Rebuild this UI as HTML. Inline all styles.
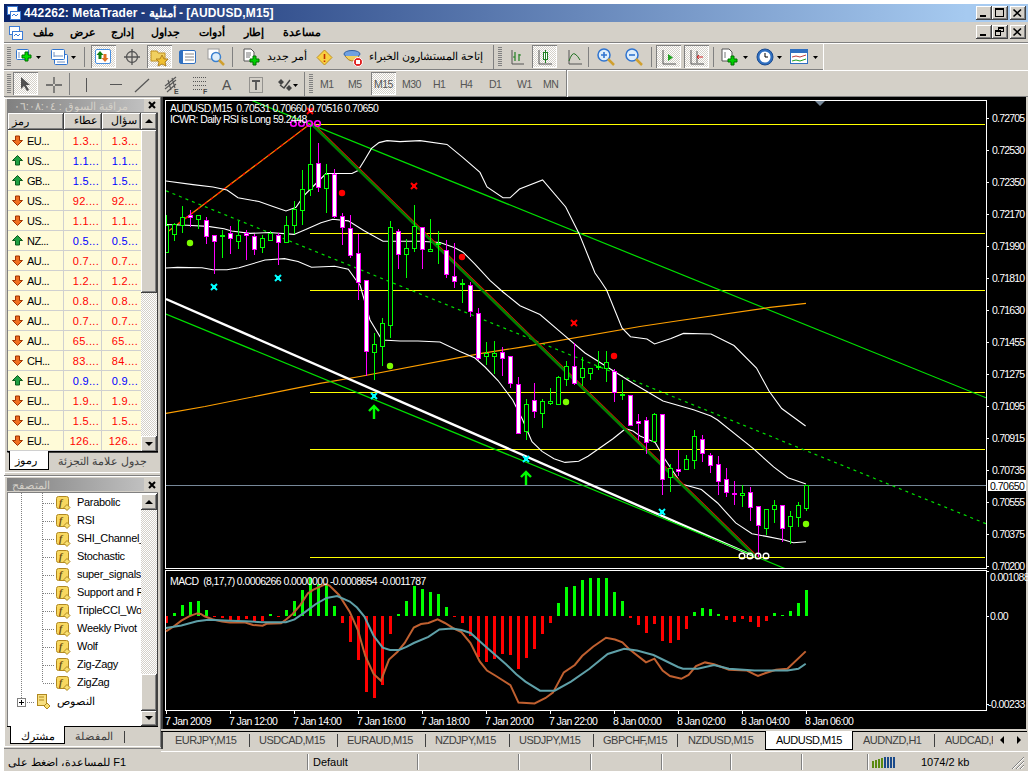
<!DOCTYPE html><html><head><meta charset="utf-8"><style>
*{margin:0;padding:0;box-sizing:border-box}
html,body{width:1032px;height:776px;overflow:hidden;background:#fff;font-family:"Liberation Sans",sans-serif;font-size:11px;color:#000}
.a{position:absolute}
.t{position:absolute;white-space:nowrap;line-height:1;letter-spacing:-0.5px}
.btn{position:absolute;background:#d4d0c8;box-shadow:inset -1px -1px #404040,inset 1px 1px #fff,inset -2px -2px #808080}
.prs{position:absolute;background-color:#fff;background-image:repeating-conic-gradient(#d4d0c8 0 25%,#fff 0 50%);background-size:2px 2px;box-shadow:inset 1px 1px #808080,inset -1px -1px #fff}
.sep{position:absolute;width:1px;background:#808080}
.grip{position:absolute;width:4px;background:repeating-linear-gradient(180deg,#808080 0 1px,#d4d0c8 1px 2px)}
svg{position:absolute;overflow:visible}
</style></head><body><div class="a" style="left:4px;top:4px;width:1024px;height:767px;background:#d4d0c8"></div><div class="a" style="left:4px;top:4px;width:1024px;height:18px;background:linear-gradient(90deg,#0a246a 0%,#a6caf0 94%)"></div><svg style="left:6px;top:5px;" width="16" height="16" viewBox="0 0 16 16"><rect x="1.5" y="1.5" width="10" height="8" fill="#fff" stroke="#3a7bd5"/><rect x="4.5" y="6.5" width="10" height="8" fill="#fff" stroke="#3a7bd5"/><path d="M6 11l2-2 2 2 2-2" stroke="#3a7bd5" fill="none"/></svg><div class="t" style="left:24px;top:7px;color:#fff;font-weight:bold;font-size:12px;letter-spacing:0.12px">442262: MetaTrader - أمثلية - [AUDUSD,M15]</div><div class="btn" style="left:976px;top:6px;width:16px;height:14px;"></div><div class="a" style="left:980px;top:15px;width:6px;height:2px;background:#000"></div><div class="btn" style="left:992px;top:6px;width:16px;height:14px;"></div><div class="a" style="left:995px;top:8px;width:9px;height:9px;border:1px solid #000;border-top-width:2px"></div><div class="btn" style="left:1010px;top:6px;width:16px;height:14px;"></div><svg style="left:1013px;top:9px;" width="9" height="8" viewBox="0 0 9 8"><path d="M0.5 0.5L8 7.5M8 0.5L0.5 7.5" stroke="#000" stroke-width="1.6"/></svg><svg style="left:8px;top:25px;" width="16" height="16" viewBox="0 0 16 16"><rect x="1.5" y="1.5" width="10" height="8" fill="#fff" stroke="#3a7bd5"/><rect x="4.5" y="6.5" width="10" height="8" fill="#fff" stroke="#3a7bd5"/><path d="M6 11l2-2 2 2 2-2" stroke="#3a7bd5" fill="none"/></svg><div class="t" style="left:33px;top:27px;letter-spacing:0;font-size:10.5px;font-weight:bold">ملف</div><div class="t" style="left:70px;top:27px;letter-spacing:0;font-size:10.5px;font-weight:bold">عرض</div><div class="t" style="left:111px;top:27px;letter-spacing:0;font-size:10.5px;font-weight:bold">إدارج</div><div class="t" style="left:151px;top:27px;letter-spacing:0;font-size:10.5px;font-weight:bold">جداول</div><div class="t" style="left:199px;top:27px;letter-spacing:0;font-size:10.5px;font-weight:bold">أدوات</div><div class="t" style="left:244px;top:27px;letter-spacing:0;font-size:10.5px;font-weight:bold">إطار</div><div class="t" style="left:283px;top:27px;letter-spacing:0;font-size:10.5px;font-weight:bold">مساعدة</div><div class="btn" style="left:976px;top:25px;width:16px;height:14px;"></div><div class="a" style="left:980px;top:34px;width:6px;height:2px;background:#000"></div><div class="btn" style="left:992px;top:25px;width:16px;height:14px;"></div><div class="a" style="left:998px;top:27px;width:6px;height:5px;border:1px solid #000;border-top-width:2px"></div><div class="a" style="left:995px;top:30px;width:6px;height:6px;border:1px solid #000;border-top-width:2px;background:#d4d0c8"></div><div class="btn" style="left:1010px;top:25px;width:16px;height:14px;"></div><svg style="left:1013px;top:28px;" width="9" height="8" viewBox="0 0 9 8"><path d="M0.5 0.5L8 7.5M8 0.5L0.5 7.5" stroke="#000" stroke-width="1.6"/></svg><div class="a" style="left:4px;top:42px;width:1024px;height:1px;background:#808080"></div><div class="a" style="left:4px;top:43px;width:1024px;height:1px;background:#fff"></div><div class="a" style="left:4px;top:69px;width:820px;height:1px;background:#808080"></div><div class="a" style="left:4px;top:70px;width:1024px;height:1px;background:#fff"></div><div class="a" style="left:823px;top:43px;width:1px;height:27px;background:#fff"></div><div class="a" style="left:4px;top:96px;width:1024px;height:1px;background:#808080"></div><div class="a" style="left:566px;top:70px;width:1px;height:27px;background:#808080"></div><div class="a" style="left:567px;top:70px;width:1px;height:27px;background:#fff"></div><div class="grip" style="left:7px;top:47px;height:19px"></div><svg style="left:16px;top:49px;" width="18" height="16" viewBox="0 0 18 16"><rect x="0.5" y="0.5" width="12" height="10" rx="1" fill="#fff" stroke="#2f74d0"/><path d="M3 3v6" stroke="#7090c0"/><path d="M9 3h3v3h3v3h-3v3h-3v-3h-3v-3h3z" fill="#00e000" stroke="#007000"/></svg><svg style="left:36px;top:56px;" width="5" height="3" viewBox="0 0 5 3"><path d="M0 0h5l-2.5 3z" fill="#000"/></svg><svg style="left:51px;top:49px;" width="18" height="17" viewBox="0 0 18 17"><rect x="3.5" y="5.5" width="13" height="10" rx="1" fill="#fff" stroke="#2f74d0"/><rect x="0.5" y="0.5" width="13" height="10" rx="1" fill="#fff" stroke="#2f74d0"/><path d="M3 7h9M3 3v5M6 13h8" stroke="#7090c0"/></svg><svg style="left:71px;top:56px;" width="5" height="3" viewBox="0 0 5 3"><path d="M0 0h5l-2.5 3z" fill="#000"/></svg><div class="sep" style="left:84px;top:47px;height:20px"></div><div class="prs" style="left:91px;top:45px;width:25px;height:23px;"></div><svg style="left:95px;top:49px;" width="17" height="16" viewBox="0 0 17 16"><rect x="0.5" y="0.5" width="15" height="14" rx="1.5" fill="#fff" stroke="#4a90e0"/><path d="M5 2l-3.5 4h2v4h3v-4h2z" fill="#108010"/><path d="M10 13l3.5-4h-2v-4h-3v4h-2z" fill="#e07020"/></svg><svg style="left:124px;top:49px;" width="16" height="16" viewBox="0 0 16 16"><circle cx="8" cy="8" r="5.5" fill="none" stroke="#555" stroke-width="1.3"/><path d="M8 0v16M0 8h16" stroke="#555" stroke-width="1.3"/></svg><div class="prs" style="left:147px;top:45px;width:25px;height:23px;"></div><svg style="left:150px;top:48px;" width="20" height="18" viewBox="0 0 20 18"><path d="M1 3h6l1 2h7v8h-14z" fill="#f0d060" stroke="#c09020"/><path d="M12 7l2 4h4l-3 3 1 4-4-2-4 2 1-4-3-3h4z" fill="#f0c030" stroke="#b08020"/></svg><svg style="left:179px;top:50px;" width="17" height="14" viewBox="0 0 17 14"><rect x="0.5" y="0.5" width="16" height="13" rx="1.5" fill="#fff" stroke="#3070c0"/><rect x="1" y="1" width="3" height="12" fill="#3070c0"/><path d="M6 4h9M6 7h9M6 10h9" stroke="#888"/></svg><svg style="left:207px;top:48px;" width="19" height="19" viewBox="0 0 19 19"><rect x="1" y="1" width="11" height="10" fill="#fff" stroke="#999"/><circle cx="9" cy="9" r="4.5" fill="#dfeefa" stroke="#3a80d0" stroke-width="1.5"/><path d="M12 12l5 5" stroke="#d0a030" stroke-width="2.5"/></svg><div class="sep" style="left:232px;top:47px;height:20px"></div><svg style="left:243px;top:48px;" width="18" height="18" viewBox="0 0 18 18"><path d="M1 1h7l3 3v9h-10z" fill="#fff" stroke="#555"/><path d="M3 5h5M3 7h5M3 9h4" stroke="#777"/><path d="M10 8h3v3h3v3h-3v3h-3v-3h-3v-3h3z" fill="#00d000" stroke="#007000"/></svg><div class="t" style="left:267px;top:51px;letter-spacing:0;font-size:11px">أمر جديد</div><svg style="left:316px;top:49px;" width="17" height="17" viewBox="0 0 17 17"><path d="M8.5 1l7.5 7.5-7.5 7.5-7.5-7.5z" fill="#f8d040" stroke="#c09020"/><path d="M8.5 5v5M8.5 11.5v1.5" stroke="#c03000" stroke-width="1.6"/></svg><svg style="left:343px;top:48px;" width="20" height="19" viewBox="0 0 20 19"><ellipse cx="9" cy="6" rx="8" ry="3.5" fill="#6fa0e0" stroke="#3060a0"/><path d="M2 8q7 10 14 0" fill="#f0d060" stroke="#b08020"/><circle cx="15" cy="14" r="4.5" fill="#e02020" stroke="#fff"/><rect x="13" y="12" width="4" height="4" fill="#fff"/></svg><div class="t" style="left:369px;top:51px;letter-spacing:0;font-size:11px">إتاحة المستشارون الخبراء</div><div class="sep" style="left:493px;top:45px;height:24px"></div><div class="grip" style="left:498px;top:47px;height:19px"></div><svg style="left:509px;top:49px;" width="16" height="16" viewBox="0 0 16 16"><path d="M3 1v14h12" stroke="#555" fill="none"/><path d="M6 3v9M6 8h-2M10 5v7M10 6h2" stroke="#208020" stroke-width="1.2"/></svg><div class="prs" style="left:532px;top:45px;width:25px;height:23px;"></div><svg style="left:536px;top:49px;" width="17" height="16" viewBox="0 0 17 16"><path d="M3 1v14h13" stroke="#555" fill="none"/><rect x="7.5" y="3.5" width="4" height="7" fill="#fff" stroke="#208020"/><path d="M9.5 1v13" stroke="#208020"/></svg><svg style="left:566px;top:49px;" width="16" height="16" viewBox="0 0 16 16"><path d="M3 1v14h13" stroke="#555" fill="none"/><path d="M3 12q3-9 6-7t5 6" stroke="#207020" fill="none"/></svg><div class="sep" style="left:588px;top:47px;height:20px"></div><svg style="left:597px;top:48px;" width="18" height="18" viewBox="0 0 18 18"><circle cx="7" cy="7" r="6" fill="#dfeefa" stroke="#2f74d0" stroke-width="1.5"/><path d="M4 7h6M7 4v6" stroke="#2f74d0" stroke-width="1.6"/><path d="M11 11l6 6" stroke="#d0a030" stroke-width="2.5"/></svg><svg style="left:625px;top:48px;" width="18" height="18" viewBox="0 0 18 18"><circle cx="7" cy="7" r="6" fill="#dfeefa" stroke="#2f74d0" stroke-width="1.5"/><path d="M4 7h6" stroke="#2f74d0" stroke-width="1.6"/><path d="M11 11l6 6" stroke="#d0a030" stroke-width="2.5"/></svg><div class="sep" style="left:651px;top:47px;height:20px"></div><div class="prs" style="left:656px;top:45px;width:25px;height:23px;"></div><svg style="left:660px;top:49px;" width="17" height="16" viewBox="0 0 17 16"><path d="M3 1v14h13" stroke="#555" fill="none"/><path d="M8 5v7l5-3.5z" fill="#20a020"/></svg><div class="prs" style="left:684px;top:45px;width:25px;height:23px;"></div><svg style="left:688px;top:49px;" width="17" height="16" viewBox="0 0 17 16"><path d="M3 1v14h13M9 2v12" stroke="#555" fill="none"/><path d="M10 8h5M11 6l-2 2 2 2" stroke="#d02020" fill="none"/></svg><div class="sep" style="left:713px;top:47px;height:20px"></div><svg style="left:721px;top:48px;" width="18" height="18" viewBox="0 0 18 18"><path d="M1 1h7l3 3v9h-10z" fill="#fff" stroke="#555"/><path d="M4 4v6" stroke="#777"/><path d="M10 8h3v3h3v3h-3v3h-3v-3h-3v-3h3z" fill="#00d000" stroke="#007000"/></svg><svg style="left:743px;top:56px;" width="5" height="3" viewBox="0 0 5 3"><path d="M0 0h5l-2.5 3z" fill="#000"/></svg><svg style="left:756px;top:48px;" width="18" height="18" viewBox="0 0 18 18"><circle cx="9" cy="9" r="8" fill="#2f6fc0" stroke="#1a4a90"/><circle cx="9" cy="9" r="5.5" fill="#fff"/><path d="M9 5v4h3" stroke="#000" fill="none"/></svg><svg style="left:777px;top:56px;" width="5" height="3" viewBox="0 0 5 3"><path d="M0 0h5l-2.5 3z" fill="#000"/></svg><svg style="left:790px;top:49px;" width="18" height="16" viewBox="0 0 18 16"><rect x="0.5" y="0.5" width="17" height="14" fill="#fff" stroke="#2f6fc0"/><rect x="1" y="1" width="16" height="3" fill="#2f6fc0"/><path d="M2 8l4-1 4 1 6-2" stroke="#c04040" fill="none"/><path d="M2 12l4-1 4 1 6-2" stroke="#20a020" fill="none"/></svg><svg style="left:813px;top:56px;" width="5" height="3" viewBox="0 0 5 3"><path d="M0 0h5l-2.5 3z" fill="#000"/></svg><div class="grip" style="left:7px;top:74px;height:20px"></div><div class="prs" style="left:13px;top:72px;width:25px;height:23px;"></div><svg style="left:20px;top:76px;" width="11" height="15" viewBox="0 0 11 15"><path d="M1 1v12l3-3 3 5 2-1-3-5h4z" fill="#505050"/></svg><svg style="left:46px;top:77px;" width="16" height="16" viewBox="0 0 16 16"><path d="M8 0v7M8 9v7M0 8h7M9 8h7" stroke="#555" stroke-width="1.3"/></svg><div class="sep" style="left:69px;top:73px;height:22px"></div><div class="a" style="left:86px;top:78px;width:1px;height:14px;background:#555"></div><div class="a" style="left:110px;top:84px;width:12px;height:1px;background:#555"></div><svg style="left:134px;top:78px;" width="16" height="15" viewBox="0 0 16 15"><path d="M1 14L15 1" stroke="#555" stroke-width="1.2"/></svg><svg style="left:162px;top:76px;" width="20" height="18" viewBox="0 0 20 18"><path d="M3 13L14 4M3 10L14 1M5 16L14 8M6 4l3 10M10 2l3 10" stroke="#555" stroke-width="1.1"/><text x="12" y="18" font-size="7" font-weight="bold" fill="#444" font-family="Liberation Sans">E</text></svg><svg style="left:192px;top:76px;" width="18" height="18" viewBox="0 0 18 18"><path d="M1 1.5h14M1 5.5h14M1 9.5h14M1 13.5h9" stroke="#555" stroke-dasharray="1 1"/><text x="11" y="18" font-size="7" font-weight="bold" fill="#444" font-family="Liberation Sans">F</text></svg><div class="t" style="left:222px;top:78px;font-size:14px;color:#505050;letter-spacing:0">A</div><svg style="left:249px;top:77px;" width="14" height="16" viewBox="0 0 14 16"><rect x="0.5" y="0.5" width="13" height="15" fill="none" stroke="#555" stroke-dasharray="1 1"/><path d="M3 4h8M7 4v9" stroke="#555" stroke-width="1.8"/></svg><svg style="left:277px;top:78px;" width="16" height="14" viewBox="0 0 16 14"><path d="M1 4l3-3 3 3-3 3zM9 10l3-3 3 3-3 3z" fill="#444"/><path d="M3 7l4 3 6-8" stroke="#444" stroke-width="1.5" fill="none"/></svg><svg style="left:293px;top:84px;" width="5" height="3" viewBox="0 0 5 3"><path d="M0 0h5l-2.5 3z" fill="#000"/></svg><div class="sep" style="left:304px;top:72px;height:24px"></div><div class="grip" style="left:309px;top:74px;height:20px"></div><div class="t" style="left:320px;top:79px;font-size:10.5px;color:#555">M1</div><div class="t" style="left:348px;top:79px;font-size:10.5px;color:#555">M5</div><div class="prs" style="left:371px;top:72px;width:25px;height:23px;"></div><div class="t" style="left:374px;top:79px;font-size:10.5px;color:#555">M15</div><div class="t" style="left:402px;top:79px;font-size:10.5px;color:#555">M30</div><div class="t" style="left:433px;top:79px;font-size:10.5px;color:#555">H1</div><div class="t" style="left:460px;top:79px;font-size:10.5px;color:#555">H4</div><div class="t" style="left:489px;top:79px;font-size:10.5px;color:#555">D1</div><div class="t" style="left:517px;top:79px;font-size:10.5px;color:#555">W1</div><div class="t" style="left:543px;top:79px;font-size:10.5px;color:#555">MN</div><div class="a" style="left:4px;top:97px;width:1px;height:650px;background:#fff"></div><div class="a" style="left:160px;top:97px;width:1px;height:650px;background:#808080"></div><div class="a" style="left:161px;top:97px;width:2px;height:634px;background:#404040"></div><div class="a" style="left:5px;top:98px;width:155px;height:1px;background:#fff"></div><div class="a" style="left:7px;top:99px;width:137px;height:13px;background:linear-gradient(90deg,#808080,#c0c0c0)"></div><div class="t" style="left:8px;top:101px;letter-spacing:0;font-size:11px;color:#d4d0c8;direction:rtl;width:120px;text-align:right">مراقبة السوق : ٠٦:٠٨:٠٤</div><svg style="left:148px;top:101px;" width="8" height="8" viewBox="0 0 8 8"><path d="M1 1l6 6M7 1l-6 6" stroke="#000" stroke-width="2"/></svg><div class="a" style="left:7px;top:112px;width:151px;height:341px;background:#fffbd8;box-shadow:inset 1px 1px #808080,inset -1px -1px #404040"></div><div class="btn" style="left:8px;top:113px;width:56px;height:17px;"></div><div class="btn" style="left:64px;top:113px;width:38px;height:17px;"></div><div class="t" style="left:68px;top:115px;letter-spacing:0;font-size:11px;width:30px;text-align:right">عطاء</div><div class="btn" style="left:102px;top:113px;width:39px;height:17px;"></div><div class="t" style="left:106px;top:115px;letter-spacing:0;font-size:11px;width:31px;text-align:right">سؤال</div><div class="t" style="left:12px;top:116px;letter-spacing:0;font-size:11px">رمز</div><div class="a" style="left:8px;top:130px;width:133px;height:1px;background:#fff"></div><div class="a" style="left:8px;top:150px;width:133px;height:1px;background:#d0d0d0"></div><svg style="left:12px;top:135px;" width="11" height="11" viewBox="0 0 11 11"><path d="M5.5 10.5L10.5 5.5H7.5V1H3.5V5.5H0.5Z" fill="#f07020" stroke="#a03000"/></svg><div class="t" style="left:27px;top:136px;font-size:11px">EU...</div><div class="t" style="left:64px;top:136px;font-size:11px;color:#ff0000;width:35px;text-align:right;letter-spacing:0.3px">1.3...</div><div class="t" style="left:102px;top:136px;font-size:11px;color:#ff0000;width:36px;text-align:right;letter-spacing:0.3px">1.3...</div><div class="a" style="left:8px;top:170px;width:133px;height:1px;background:#d0d0d0"></div><svg style="left:12px;top:155px;" width="11" height="11" viewBox="0 0 11 11"><path d="M5.5 0.5L10.5 5.5H7.5V10H3.5V5.5H0.5Z" fill="#20a040" stroke="#0a5a1a"/></svg><div class="t" style="left:27px;top:156px;font-size:11px">US...</div><div class="t" style="left:64px;top:156px;font-size:11px;color:#0000ff;width:35px;text-align:right;letter-spacing:0.3px">1.1...</div><div class="t" style="left:102px;top:156px;font-size:11px;color:#0000ff;width:36px;text-align:right;letter-spacing:0.3px">1.1...</div><div class="a" style="left:8px;top:190px;width:133px;height:1px;background:#d0d0d0"></div><svg style="left:12px;top:175px;" width="11" height="11" viewBox="0 0 11 11"><path d="M5.5 0.5L10.5 5.5H7.5V10H3.5V5.5H0.5Z" fill="#20a040" stroke="#0a5a1a"/></svg><div class="t" style="left:27px;top:176px;font-size:11px">GB...</div><div class="t" style="left:64px;top:176px;font-size:11px;color:#0000ff;width:35px;text-align:right;letter-spacing:0.3px">1.5...</div><div class="t" style="left:102px;top:176px;font-size:11px;color:#0000ff;width:36px;text-align:right;letter-spacing:0.3px">1.5...</div><div class="a" style="left:8px;top:210px;width:133px;height:1px;background:#d0d0d0"></div><svg style="left:12px;top:195px;" width="11" height="11" viewBox="0 0 11 11"><path d="M5.5 10.5L10.5 5.5H7.5V1H3.5V5.5H0.5Z" fill="#f07020" stroke="#a03000"/></svg><div class="t" style="left:27px;top:196px;font-size:11px">US...</div><div class="t" style="left:64px;top:196px;font-size:11px;color:#ff0000;width:35px;text-align:right;letter-spacing:0.3px">92....</div><div class="t" style="left:102px;top:196px;font-size:11px;color:#ff0000;width:36px;text-align:right;letter-spacing:0.3px">92....</div><div class="a" style="left:8px;top:230px;width:133px;height:1px;background:#d0d0d0"></div><svg style="left:12px;top:215px;" width="11" height="11" viewBox="0 0 11 11"><path d="M5.5 10.5L10.5 5.5H7.5V1H3.5V5.5H0.5Z" fill="#f07020" stroke="#a03000"/></svg><div class="t" style="left:27px;top:216px;font-size:11px">US...</div><div class="t" style="left:64px;top:216px;font-size:11px;color:#ff0000;width:35px;text-align:right;letter-spacing:0.3px">1.1...</div><div class="t" style="left:102px;top:216px;font-size:11px;color:#ff0000;width:36px;text-align:right;letter-spacing:0.3px">1.1...</div><div class="a" style="left:8px;top:250px;width:133px;height:1px;background:#d0d0d0"></div><svg style="left:12px;top:235px;" width="11" height="11" viewBox="0 0 11 11"><path d="M5.5 0.5L10.5 5.5H7.5V10H3.5V5.5H0.5Z" fill="#20a040" stroke="#0a5a1a"/></svg><div class="t" style="left:27px;top:236px;font-size:11px">NZ...</div><div class="t" style="left:64px;top:236px;font-size:11px;color:#0000ff;width:35px;text-align:right;letter-spacing:0.3px">0.5...</div><div class="t" style="left:102px;top:236px;font-size:11px;color:#0000ff;width:36px;text-align:right;letter-spacing:0.3px">0.5...</div><div class="a" style="left:8px;top:270px;width:133px;height:1px;background:#d0d0d0"></div><svg style="left:12px;top:255px;" width="11" height="11" viewBox="0 0 11 11"><path d="M5.5 10.5L10.5 5.5H7.5V1H3.5V5.5H0.5Z" fill="#f07020" stroke="#a03000"/></svg><div class="t" style="left:27px;top:256px;font-size:11px">AU...</div><div class="t" style="left:64px;top:256px;font-size:11px;color:#ff0000;width:35px;text-align:right;letter-spacing:0.3px">0.7...</div><div class="t" style="left:102px;top:256px;font-size:11px;color:#ff0000;width:36px;text-align:right;letter-spacing:0.3px">0.7...</div><div class="a" style="left:8px;top:290px;width:133px;height:1px;background:#d0d0d0"></div><svg style="left:12px;top:275px;" width="11" height="11" viewBox="0 0 11 11"><path d="M5.5 10.5L10.5 5.5H7.5V1H3.5V5.5H0.5Z" fill="#f07020" stroke="#a03000"/></svg><div class="t" style="left:27px;top:276px;font-size:11px">AU...</div><div class="t" style="left:64px;top:276px;font-size:11px;color:#ff0000;width:35px;text-align:right;letter-spacing:0.3px">1.2...</div><div class="t" style="left:102px;top:276px;font-size:11px;color:#ff0000;width:36px;text-align:right;letter-spacing:0.3px">1.2...</div><div class="a" style="left:8px;top:310px;width:133px;height:1px;background:#d0d0d0"></div><svg style="left:12px;top:295px;" width="11" height="11" viewBox="0 0 11 11"><path d="M5.5 10.5L10.5 5.5H7.5V1H3.5V5.5H0.5Z" fill="#f07020" stroke="#a03000"/></svg><div class="t" style="left:27px;top:296px;font-size:11px">AU...</div><div class="t" style="left:64px;top:296px;font-size:11px;color:#ff0000;width:35px;text-align:right;letter-spacing:0.3px">0.8...</div><div class="t" style="left:102px;top:296px;font-size:11px;color:#ff0000;width:36px;text-align:right;letter-spacing:0.3px">0.8...</div><div class="a" style="left:8px;top:330px;width:133px;height:1px;background:#d0d0d0"></div><svg style="left:12px;top:315px;" width="11" height="11" viewBox="0 0 11 11"><path d="M5.5 10.5L10.5 5.5H7.5V1H3.5V5.5H0.5Z" fill="#f07020" stroke="#a03000"/></svg><div class="t" style="left:27px;top:316px;font-size:11px">AU...</div><div class="t" style="left:64px;top:316px;font-size:11px;color:#ff0000;width:35px;text-align:right;letter-spacing:0.3px">0.7...</div><div class="t" style="left:102px;top:316px;font-size:11px;color:#ff0000;width:36px;text-align:right;letter-spacing:0.3px">0.7...</div><div class="a" style="left:8px;top:350px;width:133px;height:1px;background:#d0d0d0"></div><svg style="left:12px;top:335px;" width="11" height="11" viewBox="0 0 11 11"><path d="M5.5 10.5L10.5 5.5H7.5V1H3.5V5.5H0.5Z" fill="#f07020" stroke="#a03000"/></svg><div class="t" style="left:27px;top:336px;font-size:11px">AU...</div><div class="t" style="left:64px;top:336px;font-size:11px;color:#ff0000;width:35px;text-align:right;letter-spacing:0.3px">65....</div><div class="t" style="left:102px;top:336px;font-size:11px;color:#ff0000;width:36px;text-align:right;letter-spacing:0.3px">65....</div><div class="a" style="left:8px;top:370px;width:133px;height:1px;background:#d0d0d0"></div><svg style="left:12px;top:355px;" width="11" height="11" viewBox="0 0 11 11"><path d="M5.5 10.5L10.5 5.5H7.5V1H3.5V5.5H0.5Z" fill="#f07020" stroke="#a03000"/></svg><div class="t" style="left:27px;top:356px;font-size:11px">CH...</div><div class="t" style="left:64px;top:356px;font-size:11px;color:#ff0000;width:35px;text-align:right;letter-spacing:0.3px">83....</div><div class="t" style="left:102px;top:356px;font-size:11px;color:#ff0000;width:36px;text-align:right;letter-spacing:0.3px">84....</div><div class="a" style="left:8px;top:390px;width:133px;height:1px;background:#d0d0d0"></div><svg style="left:12px;top:375px;" width="11" height="11" viewBox="0 0 11 11"><path d="M5.5 0.5L10.5 5.5H7.5V10H3.5V5.5H0.5Z" fill="#20a040" stroke="#0a5a1a"/></svg><div class="t" style="left:27px;top:376px;font-size:11px">EU...</div><div class="t" style="left:64px;top:376px;font-size:11px;color:#0000ff;width:35px;text-align:right;letter-spacing:0.3px">0.9...</div><div class="t" style="left:102px;top:376px;font-size:11px;color:#0000ff;width:36px;text-align:right;letter-spacing:0.3px">0.9...</div><div class="a" style="left:8px;top:410px;width:133px;height:1px;background:#d0d0d0"></div><svg style="left:12px;top:395px;" width="11" height="11" viewBox="0 0 11 11"><path d="M5.5 10.5L10.5 5.5H7.5V1H3.5V5.5H0.5Z" fill="#f07020" stroke="#a03000"/></svg><div class="t" style="left:27px;top:396px;font-size:11px">EU...</div><div class="t" style="left:64px;top:396px;font-size:11px;color:#ff0000;width:35px;text-align:right;letter-spacing:0.3px">1.9...</div><div class="t" style="left:102px;top:396px;font-size:11px;color:#ff0000;width:36px;text-align:right;letter-spacing:0.3px">1.9...</div><div class="a" style="left:8px;top:430px;width:133px;height:1px;background:#d0d0d0"></div><svg style="left:12px;top:415px;" width="11" height="11" viewBox="0 0 11 11"><path d="M5.5 10.5L10.5 5.5H7.5V1H3.5V5.5H0.5Z" fill="#f07020" stroke="#a03000"/></svg><div class="t" style="left:27px;top:416px;font-size:11px">EU...</div><div class="t" style="left:64px;top:416px;font-size:11px;color:#ff0000;width:35px;text-align:right;letter-spacing:0.3px">1.5...</div><div class="t" style="left:102px;top:416px;font-size:11px;color:#ff0000;width:36px;text-align:right;letter-spacing:0.3px">1.5...</div><div class="a" style="left:8px;top:450px;width:133px;height:1px;background:#d0d0d0"></div><svg style="left:12px;top:435px;" width="11" height="11" viewBox="0 0 11 11"><path d="M5.5 10.5L10.5 5.5H7.5V1H3.5V5.5H0.5Z" fill="#f07020" stroke="#a03000"/></svg><div class="t" style="left:27px;top:436px;font-size:11px">EU...</div><div class="t" style="left:64px;top:436px;font-size:11px;color:#ff0000;width:35px;text-align:right;letter-spacing:0.3px">126...</div><div class="t" style="left:102px;top:436px;font-size:11px;color:#ff0000;width:36px;text-align:right;letter-spacing:0.3px">126...</div><div class="a" style="left:63px;top:130px;width:1px;height:321px;background:#d0d0d0"></div><div class="a" style="left:101px;top:130px;width:1px;height:321px;background:#d0d0d0"></div><div class="a" style="left:141px;top:130px;width:16px;height:306px;background-color:#fff;background-image:repeating-conic-gradient(#d4d0c8 0 25%,#fff 0 50%);background-size:2px 2px"></div><div class="btn" style="left:141px;top:113px;width:16px;height:17px;"></div><svg style="left:145px;top:119px;" width="8" height="4" viewBox="0 0 8 4"><path d="M0 4h8L4 0z" fill="#000"/></svg><div class="btn" style="left:141px;top:130px;width:16px;height:163px;"></div><div class="btn" style="left:141px;top:436px;width:16px;height:16px;"></div><svg style="left:145px;top:442px;" width="8" height="4" viewBox="0 0 8 4"><path d="M0 0h8L4 4z" fill="#000"/></svg><div class="a" style="left:7px;top:451px;width:151px;height:1px;background:#000"></div><div class="a" style="left:9px;top:451px;width:40px;height:19px;background:#fff;border:1px solid #000;border-top:none"></div><div class="t" style="left:15px;top:455px;letter-spacing:0;font-size:11px">رموز</div><div class="t" style="left:58px;top:456px;letter-spacing:0;font-size:11px;color:#404040">جدول علامة التجزئة</div><div class="a" style="left:5px;top:472px;width:155px;height:1px;background:#fff"></div><div class="a" style="left:4px;top:475px;width:156px;height:1px;background:#808080"></div><div class="a" style="left:5px;top:476px;width:155px;height:1px;background:#fff"></div><div class="a" style="left:7px;top:478px;width:137px;height:13px;background:linear-gradient(90deg,#808080,#c0c0c0)"></div><div class="t" style="left:12px;top:480px;letter-spacing:0;font-size:11px;color:#d4d0c8">المتصفح</div><svg style="left:148px;top:481px;" width="8" height="8" viewBox="0 0 8 8"><path d="M1 1l6 6M7 1l-6 6" stroke="#000" stroke-width="2"/></svg><div class="a" style="left:7px;top:492px;width:151px;height:235px;background:#fff;box-shadow:inset 1px 1px #808080,inset -1px -1px #404040"></div><div class="a" style="left:21px;top:493px;width:1px;height:205px;background:repeating-linear-gradient(180deg,#808080 0 1px,transparent 1px 2px)"></div><div class="a" style="left:42px;top:493px;width:1px;height:190px;background:repeating-linear-gradient(180deg,#808080 0 1px,transparent 1px 2px)"></div><div class="a" style="left:43px;top:503px;width:12px;height:1px;background:repeating-linear-gradient(90deg,#808080 0 1px,transparent 1px 2px)"></div><svg style="left:56px;top:496px;" width="15" height="15" viewBox="0 0 15 15"><rect x="0.5" y="0.5" width="12" height="12" rx="2" fill="#f8d860" stroke="#b08820"/><text x="3" y="10" font-size="10" font-style="italic" font-weight="bold" fill="#705010" font-family="Liberation Serif">f</text><path d="M11 8.5l3 3-3 3-3-3z" fill="#f8e070" stroke="#b08820"/></svg><div class="t" style="left:77px;top:497px;font-size:11px;width:64px;overflow:hidden;letter-spacing:-0.3px">Parabolic</div><div class="a" style="left:43px;top:521px;width:12px;height:1px;background:repeating-linear-gradient(90deg,#808080 0 1px,transparent 1px 2px)"></div><svg style="left:56px;top:514px;" width="15" height="15" viewBox="0 0 15 15"><rect x="0.5" y="0.5" width="12" height="12" rx="2" fill="#f8d860" stroke="#b08820"/><text x="3" y="10" font-size="10" font-style="italic" font-weight="bold" fill="#705010" font-family="Liberation Serif">f</text><path d="M11 8.5l3 3-3 3-3-3z" fill="#f8e070" stroke="#b08820"/></svg><div class="t" style="left:77px;top:515px;font-size:11px;width:64px;overflow:hidden;letter-spacing:-0.3px">RSI</div><div class="a" style="left:43px;top:539px;width:12px;height:1px;background:repeating-linear-gradient(90deg,#808080 0 1px,transparent 1px 2px)"></div><svg style="left:56px;top:532px;" width="15" height="15" viewBox="0 0 15 15"><rect x="0.5" y="0.5" width="12" height="12" rx="2" fill="#f8d860" stroke="#b08820"/><text x="3" y="10" font-size="10" font-style="italic" font-weight="bold" fill="#705010" font-family="Liberation Serif">f</text><path d="M11 8.5l3 3-3 3-3-3z" fill="#f8e070" stroke="#b08820"/></svg><div class="t" style="left:77px;top:533px;font-size:11px;width:64px;overflow:hidden;letter-spacing:-0.3px">SHI_Channel_</div><div class="a" style="left:43px;top:557px;width:12px;height:1px;background:repeating-linear-gradient(90deg,#808080 0 1px,transparent 1px 2px)"></div><svg style="left:56px;top:550px;" width="15" height="15" viewBox="0 0 15 15"><rect x="0.5" y="0.5" width="12" height="12" rx="2" fill="#f8d860" stroke="#b08820"/><text x="3" y="10" font-size="10" font-style="italic" font-weight="bold" fill="#705010" font-family="Liberation Serif">f</text><path d="M11 8.5l3 3-3 3-3-3z" fill="#f8e070" stroke="#b08820"/></svg><div class="t" style="left:77px;top:551px;font-size:11px;width:64px;overflow:hidden;letter-spacing:-0.3px">Stochastic</div><div class="a" style="left:43px;top:575px;width:12px;height:1px;background:repeating-linear-gradient(90deg,#808080 0 1px,transparent 1px 2px)"></div><svg style="left:56px;top:568px;" width="15" height="15" viewBox="0 0 15 15"><rect x="0.5" y="0.5" width="12" height="12" rx="2" fill="#f8d860" stroke="#b08820"/><text x="3" y="10" font-size="10" font-style="italic" font-weight="bold" fill="#705010" font-family="Liberation Serif">f</text><path d="M11 8.5l3 3-3 3-3-3z" fill="#f8e070" stroke="#b08820"/></svg><div class="t" style="left:77px;top:569px;font-size:11px;width:64px;overflow:hidden;letter-spacing:-0.3px">super_signals</div><div class="a" style="left:43px;top:593px;width:12px;height:1px;background:repeating-linear-gradient(90deg,#808080 0 1px,transparent 1px 2px)"></div><svg style="left:56px;top:586px;" width="15" height="15" viewBox="0 0 15 15"><rect x="0.5" y="0.5" width="12" height="12" rx="2" fill="#f8d860" stroke="#b08820"/><text x="3" y="10" font-size="10" font-style="italic" font-weight="bold" fill="#705010" font-family="Liberation Serif">f</text><path d="M11 8.5l3 3-3 3-3-3z" fill="#f8e070" stroke="#b08820"/></svg><div class="t" style="left:77px;top:587px;font-size:11px;width:64px;overflow:hidden;letter-spacing:-0.3px">Support and R</div><div class="a" style="left:43px;top:611px;width:12px;height:1px;background:repeating-linear-gradient(90deg,#808080 0 1px,transparent 1px 2px)"></div><svg style="left:56px;top:604px;" width="15" height="15" viewBox="0 0 15 15"><rect x="0.5" y="0.5" width="12" height="12" rx="2" fill="#f8d860" stroke="#b08820"/><text x="3" y="10" font-size="10" font-style="italic" font-weight="bold" fill="#705010" font-family="Liberation Serif">f</text><path d="M11 8.5l3 3-3 3-3-3z" fill="#f8e070" stroke="#b08820"/></svg><div class="t" style="left:77px;top:605px;font-size:11px;width:64px;overflow:hidden;letter-spacing:-0.3px">TripleCCI_Wo</div><div class="a" style="left:43px;top:629px;width:12px;height:1px;background:repeating-linear-gradient(90deg,#808080 0 1px,transparent 1px 2px)"></div><svg style="left:56px;top:622px;" width="15" height="15" viewBox="0 0 15 15"><rect x="0.5" y="0.5" width="12" height="12" rx="2" fill="#f8d860" stroke="#b08820"/><text x="3" y="10" font-size="10" font-style="italic" font-weight="bold" fill="#705010" font-family="Liberation Serif">f</text><path d="M11 8.5l3 3-3 3-3-3z" fill="#f8e070" stroke="#b08820"/></svg><div class="t" style="left:77px;top:623px;font-size:11px;width:64px;overflow:hidden;letter-spacing:-0.3px">Weekly Pivot</div><div class="a" style="left:43px;top:647px;width:12px;height:1px;background:repeating-linear-gradient(90deg,#808080 0 1px,transparent 1px 2px)"></div><svg style="left:56px;top:640px;" width="15" height="15" viewBox="0 0 15 15"><rect x="0.5" y="0.5" width="12" height="12" rx="2" fill="#f8d860" stroke="#b08820"/><text x="3" y="10" font-size="10" font-style="italic" font-weight="bold" fill="#705010" font-family="Liberation Serif">f</text><path d="M11 8.5l3 3-3 3-3-3z" fill="#f8e070" stroke="#b08820"/></svg><div class="t" style="left:77px;top:641px;font-size:11px;width:64px;overflow:hidden;letter-spacing:-0.3px">Wolf</div><div class="a" style="left:43px;top:665px;width:12px;height:1px;background:repeating-linear-gradient(90deg,#808080 0 1px,transparent 1px 2px)"></div><svg style="left:56px;top:658px;" width="15" height="15" viewBox="0 0 15 15"><rect x="0.5" y="0.5" width="12" height="12" rx="2" fill="#f8d860" stroke="#b08820"/><text x="3" y="10" font-size="10" font-style="italic" font-weight="bold" fill="#705010" font-family="Liberation Serif">f</text><path d="M11 8.5l3 3-3 3-3-3z" fill="#f8e070" stroke="#b08820"/></svg><div class="t" style="left:77px;top:659px;font-size:11px;width:64px;overflow:hidden;letter-spacing:-0.3px">Zig-Zagy</div><div class="a" style="left:43px;top:683px;width:12px;height:1px;background:repeating-linear-gradient(90deg,#808080 0 1px,transparent 1px 2px)"></div><svg style="left:56px;top:676px;" width="15" height="15" viewBox="0 0 15 15"><rect x="0.5" y="0.5" width="12" height="12" rx="2" fill="#f8d860" stroke="#b08820"/><text x="3" y="10" font-size="10" font-style="italic" font-weight="bold" fill="#705010" font-family="Liberation Serif">f</text><path d="M11 8.5l3 3-3 3-3-3z" fill="#f8e070" stroke="#b08820"/></svg><div class="t" style="left:77px;top:677px;font-size:11px;width:64px;overflow:hidden;letter-spacing:-0.3px">ZigZag</div><div class="a" style="left:17px;top:698px;width:9px;height:9px;background:#fff;border:1px solid #808080"></div><div class="a" style="left:19px;top:702px;width:5px;height:1px;background:#000"></div><div class="a" style="left:21px;top:700px;width:1px;height:5px;background:#000"></div><div class="a" style="left:27px;top:702px;width:8px;height:1px;background:repeating-linear-gradient(90deg,#808080 0 1px,transparent 1px 2px)"></div><svg style="left:36px;top:693px;" width="15" height="16" viewBox="0 0 15 16"><rect x="1.5" y="1.5" width="9" height="11" fill="#f8e080" stroke="#b08820"/><path d="M3 4h5M3 7h5" stroke="#b08820"/><path d="M11 10l3 3-3 3-3-3z" fill="#f8e070" stroke="#b08820"/></svg><div class="t" style="left:57px;top:696px;letter-spacing:0;font-size:11px">النصوص</div><div class="a" style="left:141px;top:509px;width:16px;height:165px;background-color:#fff;background-image:repeating-conic-gradient(#d4d0c8 0 25%,#fff 0 50%);background-size:2px 2px"></div><div class="btn" style="left:141px;top:494px;width:16px;height:16px;"></div><svg style="left:145px;top:500px;" width="8" height="4" viewBox="0 0 8 4"><path d="M0 4h8L4 0z" fill="#000"/></svg><div class="btn" style="left:141px;top:674px;width:16px;height:37px;"></div><div class="btn" style="left:141px;top:711px;width:16px;height:15px;"></div><svg style="left:145px;top:716px;" width="8" height="4" viewBox="0 0 8 4"><path d="M0 0h8L4 4z" fill="#000"/></svg><div class="a" style="left:7px;top:726px;width:151px;height:1px;background:#000"></div><div class="a" style="left:10px;top:726px;width:55px;height:18px;background:#fff;border:1px solid #000;border-top:none"></div><div class="t" style="left:21px;top:731px;letter-spacing:0;font-size:11px">مشترك</div><div class="t" style="left:75px;top:731px;letter-spacing:0;font-size:11px;color:#404040">المفضلة</div><div class="a" style="left:124px;top:731px;width:1px;height:12px;background:#404040"></div><div class="a" style="left:5px;top:746px;width:155px;height:1px;background:#fff"></div><div class="a" style="left:4px;top:748px;width:157px;height:1px;background:#808080"></div><svg style="left:163px;top:97px" width="863" height="632" viewBox="163 97 863 632"><rect x="163" y="97" width="863" height="632" fill="#000"/><rect x="165.5" y="100.5" width="821" height="468" fill="none" stroke="#fff"/><rect x="165.5" y="570.5" width="821" height="140" fill="none" stroke="#fff"/><path d="M986 118.5h3" stroke="#fff"/><path d="M986 150.5h3" stroke="#fff"/><path d="M986 182.5h3" stroke="#fff"/><path d="M986 214.5h3" stroke="#fff"/><path d="M986 246.5h3" stroke="#fff"/><path d="M986 278.5h3" stroke="#fff"/><path d="M986 310.5h3" stroke="#fff"/><path d="M986 342.5h3" stroke="#fff"/><path d="M986 374.5h3" stroke="#fff"/><path d="M986 406.5h3" stroke="#fff"/><path d="M986 438.5h3" stroke="#fff"/><path d="M986 470.5h3" stroke="#fff"/><path d="M986 502.5h3" stroke="#fff"/><path d="M986 534.5h3" stroke="#fff"/><path d="M986 566.5h3" stroke="#fff"/><path d="M166.5 711v3" stroke="#fff"/><path d="M230.5 711v3" stroke="#fff"/><path d="M294.5 711v3" stroke="#fff"/><path d="M358.5 711v3" stroke="#fff"/><path d="M422.5 711v3" stroke="#fff"/><path d="M486.5 711v3" stroke="#fff"/><path d="M550.5 711v3" stroke="#fff"/><path d="M614.5 711v3" stroke="#fff"/><path d="M678.5 711v3" stroke="#fff"/><path d="M742.5 711v3" stroke="#fff"/><path d="M806.5 711v3" stroke="#fff"/><path d="M986 571.5h3" stroke="#fff"/><path d="M986 616.5h3" stroke="#fff"/><path d="M986 704.5h3" stroke="#fff"/><path d="M310 124.5H985" stroke="#ffff00"/><path d="M310 233.5H985" stroke="#ffff00"/><path d="M310 290.5H985" stroke="#ffff00"/><path d="M310 392.5H985" stroke="#ffff00"/><path d="M310 449.5H985" stroke="#ffff00"/><path d="M310 557.5H985" stroke="#ffff00"/><path d="M166 485.5H986" stroke="#778899"/><clipPath id="mc"><rect x="166" y="101" width="820" height="467"/></clipPath><g clip-path="url(#mc)"><path d="M250 99.7L986 397.8" stroke="#00e000" stroke-width="1.2"/><path d="M166 190.8L986 523.7" stroke="#00e000" stroke-width="1.2" stroke-dasharray="3 4"/><polyline points="166,413.4 205,406.5 320,383.4 360,376.5 480,353.6 520,347.4 640,326.5 680,320.5 770,307.4 806,303.4" fill="none" stroke="#ffa000" stroke-width="1.2"/><path d="M166 233L310 124" stroke="#ff8000" stroke-width="1.2"/><path d="M166 233L310 124" stroke="#ff0000" stroke-width="1.2" stroke-dasharray="3 5"/><path d="M166 299L756 557" stroke="#fff" stroke-width="2.4"/><path d="M166 314L786 569" stroke="#00e000" stroke-width="1.2"/><polyline points="166,181 193,184.6 213,187 227,190 238,197.8 259,201.5 273,206.4 286,211 296,207.3 304,195.7 313.5,186 326,173.5 352,173.5 358,170.6 364,161 371.5,148.4 379,142.6 387,140.6 400,141.6 420,140.6 447,144.4 463,157.6 480,172.4 487,187 503,197.8 510,197.8 519.5,189 542.6,180 565.7,207 579,233.4 595,273 600,280 606.6,290 622,328 630.5,336.7 647,339 654.5,344 671,338.5 683.5,333.4 711,334 734,345.5 756.5,368 769,391 781.7,408.5 805.6,426" fill="none" stroke="#fff" stroke-width="1.1"/><polyline points="166,224.5 187,225.3 208,226.4 224,228.7 231.6,231 250,233.4 269,232.5 294,234.4 305.7,229.6 321,222.8 332.8,219.3 348.3,220.9 363.7,230.5 383,241.2 420,241.2 440,242.5 454.8,247.7 463,252.2 474.7,263.8 490.2,280.6 503,292 520,305.7 540,314.5 560,331.6 585,353 633,383.3 663,401 693.5,409.8 711,416 717.6,420 753.7,448.9 773.6,466.9 788,477.8 806,484" fill="none" stroke="#fff" stroke-width="1.1"/><polyline points="166,268 177.5,267.4 202,267.8 213,269.7 227,269.7 239,267.8 265,260 284.5,258.6 298,261.5 311.5,267.3 334.7,266.3 348.3,269.2 356,280 360,285 370,320 382,340 400,341 418,341 440,342 460,351.5 475,358 485,367 498,380.5 512.7,400 522.5,419.6 532,441.6 542,451.4 554,458.7 565,462.4 578.7,461.2 588,456.3 613,438.7 625.5,428.7 633,431 640,436 655.3,442.6 665.3,459.7 681.5,484 701.4,489.5 717.6,503 735.7,522.9 752,533.7 766.4,536.4 784.4,540 793.4,542.7 806,541.8" fill="none" stroke="#fff" stroke-width="1.1"/><path d="M312 122.5L760 559" stroke="#ff0000" stroke-width="1.2"/><path d="M310 122.5L758 559" stroke="#008000" stroke-width="2.6"/><path d="M166.5 215V225M166.5 252V253" stroke="#00ff00"/><rect x="164.5" y="225.5" width="4" height="27" fill="#000" stroke="#00ff00"/><path d="M174.5 223V224M174.5 234V241" stroke="#00ff00"/><rect x="172.5" y="224.5" width="4" height="10" fill="#000" stroke="#00ff00"/><path d="M182.5 206V217M182.5 225V233" stroke="#00ff00"/><rect x="180.5" y="217.5" width="4" height="8" fill="#000" stroke="#00ff00"/><path d="M190.5 210V227" stroke="#ff00ff"/><rect x="188.5" y="215.5" width="4" height="2" fill="#fff" stroke="#ff00ff"/><path d="M198.5 215V215M198.5 219V229" stroke="#00ff00"/><rect x="196.5" y="215.5" width="4" height="4" fill="#000" stroke="#00ff00"/><path d="M206.5 217V244" stroke="#ff00ff"/><rect x="204.5" y="220.5" width="4" height="16" fill="#fff" stroke="#ff00ff"/><path d="M214.5 235V274" stroke="#ff00ff"/><rect x="212.5" y="235.5" width="4" height="6" fill="#fff" stroke="#ff00ff"/><path d="M222.5 230V235M222.5 236V258" stroke="#00ff00"/><rect x="220.5" y="235.5" width="4" height="1" fill="#000" stroke="#00ff00"/><path d="M230.5 226V254" stroke="#ff00ff"/><rect x="228.5" y="233.5" width="4" height="5" fill="#fff" stroke="#ff00ff"/><path d="M238.5 221V235M238.5 241V249" stroke="#00ff00"/><rect x="236.5" y="235.5" width="4" height="6" fill="#000" stroke="#00ff00"/><path d="M246.5 230V260" stroke="#ff00ff"/><rect x="244.5" y="233.5" width="4" height="2" fill="#fff" stroke="#ff00ff"/><path d="M254.5 234V255" stroke="#ff00ff"/><rect x="252.5" y="236.5" width="4" height="13" fill="#fff" stroke="#ff00ff"/><path d="M262.5 235V238M262.5 247V253" stroke="#00ff00"/><rect x="260.5" y="238.5" width="4" height="9" fill="#000" stroke="#00ff00"/><path d="M270.5 231V233M270.5 240V241" stroke="#00ff00"/><rect x="268.5" y="233.5" width="4" height="7" fill="#000" stroke="#00ff00"/><path d="M278.5 233V265" stroke="#ff00ff"/><rect x="276.5" y="235.5" width="4" height="7" fill="#fff" stroke="#ff00ff"/><path d="M286.5 216V225M286.5 242V243" stroke="#00ff00"/><rect x="284.5" y="225.5" width="4" height="17" fill="#000" stroke="#00ff00"/><path d="M294.5 201V209M294.5 225V234" stroke="#00ff00"/><rect x="292.5" y="209.5" width="4" height="16" fill="#000" stroke="#00ff00"/><path d="M302.5 170V189M302.5 210V225" stroke="#00ff00"/><rect x="300.5" y="189.5" width="4" height="21" fill="#000" stroke="#00ff00"/><path d="M310.5 124V164M310.5 189V196" stroke="#00ff00"/><rect x="308.5" y="164.5" width="4" height="25" fill="#000" stroke="#00ff00"/><path d="M318.5 143V192" stroke="#ff00ff"/><rect x="316.5" y="163.5" width="4" height="24" fill="#fff" stroke="#ff00ff"/><path d="M326.5 164V174M326.5 188V213" stroke="#00ff00"/><rect x="324.5" y="174.5" width="4" height="14" fill="#000" stroke="#00ff00"/><path d="M334.5 169V218" stroke="#ff00ff"/><rect x="332.5" y="174.5" width="4" height="42" fill="#fff" stroke="#ff00ff"/><path d="M342.5 213V245" stroke="#ff00ff"/><rect x="340.5" y="216.5" width="4" height="11" fill="#fff" stroke="#ff00ff"/><path d="M350.5 215V258" stroke="#ff00ff"/><rect x="348.5" y="228.5" width="4" height="27" fill="#fff" stroke="#ff00ff"/><path d="M358.5 234V300" stroke="#ff00ff"/><rect x="356.5" y="253.5" width="4" height="29" fill="#fff" stroke="#ff00ff"/><path d="M366.5 280V376" stroke="#ff00ff"/><rect x="364.5" y="280.5" width="4" height="71" fill="#fff" stroke="#ff00ff"/><path d="M374.5 333V344M374.5 352V380" stroke="#00ff00"/><rect x="372.5" y="344.5" width="4" height="8" fill="#000" stroke="#00ff00"/><path d="M382.5 318V323M382.5 346V366" stroke="#00ff00"/><rect x="380.5" y="323.5" width="4" height="23" fill="#000" stroke="#00ff00"/><path d="M390.5 221V227M390.5 325V338" stroke="#00ff00"/><rect x="388.5" y="227.5" width="4" height="98" fill="#000" stroke="#00ff00"/><path d="M398.5 229V269" stroke="#ff00ff"/><rect x="396.5" y="231.5" width="4" height="23" fill="#fff" stroke="#ff00ff"/><path d="M406.5 239V248M406.5 254V278" stroke="#00ff00"/><rect x="404.5" y="248.5" width="4" height="6" fill="#000" stroke="#00ff00"/><path d="M414.5 205V226M414.5 248V252" stroke="#00ff00"/><rect x="412.5" y="226.5" width="4" height="22" fill="#000" stroke="#00ff00"/><path d="M422.5 227V269" stroke="#ff00ff"/><rect x="420.5" y="227.5" width="4" height="22" fill="#fff" stroke="#ff00ff"/><path d="M430.5 219V249M430.5 251V252" stroke="#00ff00"/><rect x="428.5" y="249.5" width="4" height="2" fill="#000" stroke="#00ff00"/><path d="M438.5 231V243M438.5 244V264" stroke="#00ff00"/><rect x="436.5" y="243.5" width="4" height="1" fill="#000" stroke="#00ff00"/><path d="M446.5 240V278" stroke="#ff00ff"/><rect x="444.5" y="250.5" width="4" height="24" fill="#fff" stroke="#ff00ff"/><path d="M454.5 243V288" stroke="#ff00ff"/><rect x="452.5" y="276.5" width="4" height="5" fill="#fff" stroke="#ff00ff"/><path d="M462.5 279V283M462.5 284V303" stroke="#00ff00"/><rect x="460.5" y="283.5" width="4" height="1" fill="#000" stroke="#00ff00"/><path d="M470.5 282V317" stroke="#ff00ff"/><rect x="468.5" y="285.5" width="4" height="26" fill="#fff" stroke="#ff00ff"/><path d="M478.5 308V360" stroke="#ff00ff"/><rect x="476.5" y="313.5" width="4" height="45" fill="#fff" stroke="#ff00ff"/><path d="M486.5 342V353M486.5 356V365" stroke="#00ff00"/><rect x="484.5" y="353.5" width="4" height="3" fill="#000" stroke="#00ff00"/><path d="M494.5 341V353M494.5 356V374" stroke="#00ff00"/><rect x="492.5" y="353.5" width="4" height="3" fill="#000" stroke="#00ff00"/><path d="M502.5 347V376" stroke="#ff00ff"/><rect x="500.5" y="352.5" width="4" height="6" fill="#fff" stroke="#ff00ff"/><path d="M510.5 356V388" stroke="#ff00ff"/><rect x="508.5" y="356.5" width="4" height="27" fill="#fff" stroke="#ff00ff"/><path d="M518.5 377V434" stroke="#ff00ff"/><rect x="516.5" y="384.5" width="4" height="49" fill="#fff" stroke="#ff00ff"/><path d="M526.5 399V404M526.5 431V440" stroke="#00ff00"/><rect x="524.5" y="404.5" width="4" height="27" fill="#000" stroke="#00ff00"/><path d="M534.5 383V418" stroke="#ff00ff"/><rect x="532.5" y="400.5" width="4" height="11" fill="#fff" stroke="#ff00ff"/><path d="M542.5 399V401M542.5 413V428" stroke="#00ff00"/><rect x="540.5" y="401.5" width="4" height="12" fill="#000" stroke="#00ff00"/><path d="M550.5 388V401M550.5 403V405" stroke="#00ff00"/><rect x="548.5" y="401.5" width="4" height="2" fill="#000" stroke="#00ff00"/><path d="M558.5 376V377M558.5 404V405" stroke="#00ff00"/><rect x="556.5" y="377.5" width="4" height="27" fill="#000" stroke="#00ff00"/><path d="M566.5 361V366M566.5 379V386" stroke="#00ff00"/><rect x="564.5" y="366.5" width="4" height="13" fill="#000" stroke="#00ff00"/><path d="M574.5 343V385" stroke="#ff00ff"/><rect x="572.5" y="366.5" width="4" height="17" fill="#fff" stroke="#ff00ff"/><path d="M582.5 357V368M582.5 377V386" stroke="#00ff00"/><rect x="580.5" y="368.5" width="4" height="9" fill="#000" stroke="#00ff00"/><path d="M590.5 368V368M590.5 373V380" stroke="#00ff00"/><rect x="588.5" y="368.5" width="4" height="5" fill="#000" stroke="#00ff00"/><path d="M598.5 351V366M598.5 367V370" stroke="#00ff00"/><rect x="596.5" y="366.5" width="4" height="1" fill="#000" stroke="#00ff00"/><path d="M606.5 351V362M606.5 368V382" stroke="#00ff00"/><rect x="604.5" y="362.5" width="4" height="6" fill="#000" stroke="#00ff00"/><path d="M614.5 369V402" stroke="#ff00ff"/><rect x="612.5" y="371.5" width="4" height="21" fill="#fff" stroke="#ff00ff"/><path d="M622.5 380V394M622.5 395V400" stroke="#00ff00"/><rect x="620.5" y="394.5" width="4" height="1" fill="#000" stroke="#00ff00"/><path d="M630.5 395V426" stroke="#ff00ff"/><rect x="628.5" y="395.5" width="4" height="30" fill="#fff" stroke="#ff00ff"/><path d="M638.5 414V440" stroke="#ff00ff"/><rect x="636.5" y="421.5" width="4" height="2" fill="#fff" stroke="#ff00ff"/><path d="M646.5 417V454" stroke="#ff00ff"/><rect x="644.5" y="420.5" width="4" height="22" fill="#fff" stroke="#ff00ff"/><path d="M654.5 413V414M654.5 441V442" stroke="#00ff00"/><rect x="652.5" y="414.5" width="4" height="27" fill="#000" stroke="#00ff00"/><path d="M662.5 414V495" stroke="#ff00ff"/><rect x="660.5" y="414.5" width="4" height="65" fill="#fff" stroke="#ff00ff"/><path d="M670.5 464V468M670.5 477V492" stroke="#00ff00"/><rect x="668.5" y="468.5" width="4" height="9" fill="#000" stroke="#00ff00"/><path d="M678.5 450V476" stroke="#ff00ff"/><rect x="676.5" y="469.5" width="4" height="2" fill="#fff" stroke="#ff00ff"/><path d="M686.5 455V459M686.5 469V470" stroke="#00ff00"/><rect x="684.5" y="459.5" width="4" height="10" fill="#000" stroke="#00ff00"/><path d="M694.5 430V436M694.5 460V469" stroke="#00ff00"/><rect x="692.5" y="436.5" width="4" height="24" fill="#000" stroke="#00ff00"/><path d="M702.5 435V462" stroke="#ff00ff"/><rect x="700.5" y="439.5" width="4" height="14" fill="#fff" stroke="#ff00ff"/><path d="M710.5 453V473" stroke="#ff00ff"/><rect x="708.5" y="455.5" width="4" height="10" fill="#fff" stroke="#ff00ff"/><path d="M718.5 456V495" stroke="#ff00ff"/><rect x="716.5" y="464.5" width="4" height="17" fill="#fff" stroke="#ff00ff"/><path d="M726.5 468V497" stroke="#ff00ff"/><rect x="724.5" y="479.5" width="4" height="13" fill="#fff" stroke="#ff00ff"/><path d="M734.5 481V505" stroke="#ff00ff"/><rect x="732.5" y="493.5" width="4" height="1" fill="#fff" stroke="#ff00ff"/><path d="M742.5 485V493M742.5 495V507" stroke="#00ff00"/><rect x="740.5" y="493.5" width="4" height="2" fill="#000" stroke="#00ff00"/><path d="M750.5 487V521" stroke="#ff00ff"/><rect x="748.5" y="492.5" width="4" height="15" fill="#fff" stroke="#ff00ff"/><path d="M758.5 506V557" stroke="#ff00ff"/><rect x="756.5" y="506.5" width="4" height="19" fill="#fff" stroke="#ff00ff"/><path d="M766.5 509V509M766.5 528V535" stroke="#00ff00"/><rect x="764.5" y="509.5" width="4" height="19" fill="#000" stroke="#00ff00"/><path d="M774.5 500V505M774.5 509V523" stroke="#00ff00"/><rect x="772.5" y="505.5" width="4" height="4" fill="#000" stroke="#00ff00"/><path d="M782.5 505V542" stroke="#ff00ff"/><rect x="780.5" y="505.5" width="4" height="23" fill="#fff" stroke="#ff00ff"/><path d="M790.5 511V516M790.5 526V544" stroke="#00ff00"/><rect x="788.5" y="516.5" width="4" height="10" fill="#000" stroke="#00ff00"/><path d="M798.5 502V505M798.5 517V527" stroke="#00ff00"/><rect x="796.5" y="505.5" width="4" height="12" fill="#000" stroke="#00ff00"/><path d="M806.5 485V485M806.5 508V511" stroke="#00ff00"/><rect x="804.5" y="485.5" width="4" height="23" fill="#000" stroke="#00ff00"/><circle cx="293.5" cy="123.5" r="2.8" fill="none" stroke="#ff00ff" stroke-width="1.6"/><circle cx="301.5" cy="123.5" r="2.8" fill="none" stroke="#ff00ff" stroke-width="1.6"/><circle cx="309.5" cy="123.5" r="2.8" fill="none" stroke="#ff00ff" stroke-width="1.6"/><circle cx="317.5" cy="123.5" r="2.8" fill="none" stroke="#ff00ff" stroke-width="1.6"/><path d="M307 108l2 2M313 108l-2 2M307 114l2-2M313 114l-2-2M308 111h4M310 109v4" stroke="#ff0000" stroke-width="2"/><path d="M411 183l2 2M417 183l-2 2M411 189l2-2M417 189l-2-2M412 186h4M414 184v4" stroke="#ff0000" stroke-width="2"/><path d="M571 320l2 2M577 320l-2 2M571 326l2-2M577 326l-2-2M572 323h4M574 321v4" stroke="#ff0000" stroke-width="2"/><path d="M211 284l2 2M217 284l-2 2M211 290l2-2M217 290l-2-2M212 287h4M214 285v4" stroke="#00ffff" stroke-width="2"/><path d="M275 275l2 2M281 275l-2 2M275 281l2-2M281 281l-2-2M276 278h4M278 276v4" stroke="#00ffff" stroke-width="2"/><path d="M371 393l2 2M377 393l-2 2M371 399l2-2M377 399l-2-2M372 396h4M374 394v4" stroke="#00ffff" stroke-width="2"/><path d="M523 456l2 2M529 456l-2 2M523 462l2-2M529 462l-2-2M524 459h4M526 457v4" stroke="#00ffff" stroke-width="2"/><path d="M659 509l2 2M665 509l-2 2M659 515l2-2M665 515l-2-2M660 512h4M662 510v4" stroke="#00ffff" stroke-width="2"/><circle cx="342" cy="193" r="3.2" fill="#ff0000"/><circle cx="462" cy="257" r="3.2" fill="#ff0000"/><circle cx="614" cy="356" r="3.2" fill="#ff0000"/><circle cx="190" cy="243" r="3.2" fill="#7cfc00"/><circle cx="390" cy="366" r="3.2" fill="#7cfc00"/><circle cx="566" cy="402" r="3.2" fill="#7cfc00"/><circle cx="806" cy="524" r="3.2" fill="#7cfc00"/><path d="M369 411L374 406L379 411M374 406V419" stroke="#00ff00" stroke-width="2.4" fill="none"/><path d="M521 477L526 472L531 477M526 472V485" stroke="#00ff00" stroke-width="2.4" fill="none"/><circle cx="742" cy="556" r="2.8" fill="none" stroke="#fff" stroke-width="1.4"/><circle cx="750" cy="556" r="2.8" fill="none" stroke="#fff" stroke-width="1.4"/><circle cx="758" cy="556" r="2.8" fill="none" stroke="#fff" stroke-width="1.4"/><circle cx="766" cy="556" r="2.8" fill="none" stroke="#fff" stroke-width="1.4"/></g><path d="M815 101h10l-5 5z" fill="#778899"/><clipPath id="md"><rect x="166" y="571" width="820" height="139"/></clipPath><g clip-path="url(#md)" shape-rendering="crispEdges"><rect x="165" y="616" width="3" height="7" fill="#ff0000"/><rect x="173" y="613" width="3" height="3" fill="#00ff00"/><rect x="181" y="605" width="3" height="11" fill="#00ff00"/><rect x="189" y="602" width="3" height="14" fill="#00ff00"/><rect x="197" y="601" width="3" height="15" fill="#00ff00"/><rect x="205" y="610" width="3" height="6" fill="#00ff00"/><rect x="213" y="616" width="3" height="1" fill="#ff0000"/><rect x="221" y="616" width="3" height="2" fill="#ff0000"/><rect x="229" y="616" width="3" height="4" fill="#ff0000"/><rect x="237" y="616" width="3" height="4" fill="#ff0000"/><rect x="245" y="616" width="3" height="3" fill="#ff0000"/><rect x="253" y="616" width="3" height="5" fill="#ff0000"/><rect x="261" y="616" width="3" height="5" fill="#ff0000"/><rect x="269" y="614" width="3" height="2" fill="#00ff00"/><rect x="277" y="616" width="3" height="1" fill="#ff0000"/><rect x="285" y="610" width="3" height="6" fill="#00ff00"/><rect x="293" y="601" width="3" height="15" fill="#00ff00"/><rect x="301" y="590" width="3" height="26" fill="#00ff00"/><rect x="309" y="578" width="3" height="38" fill="#00ff00"/><rect x="317" y="584" width="3" height="32" fill="#00ff00"/><rect x="325" y="584.5" width="3" height="31.5" fill="#00ff00"/><rect x="333" y="606" width="3" height="10" fill="#00ff00"/><rect x="341" y="616" width="3" height="7" fill="#ff0000"/><rect x="349" y="616" width="3" height="26" fill="#ff0000"/><rect x="357" y="616" width="3" height="44" fill="#ff0000"/><rect x="365" y="616" width="3" height="76" fill="#ff0000"/><rect x="373" y="616" width="3" height="82" fill="#ff0000"/><rect x="381" y="616" width="3" height="69" fill="#ff0000"/><rect x="389" y="616" width="3" height="18" fill="#ff0000"/><rect x="397" y="614" width="3" height="2" fill="#00ff00"/><rect x="405" y="601" width="3" height="15" fill="#00ff00"/><rect x="413" y="586" width="3" height="30" fill="#00ff00"/><rect x="421" y="589" width="3" height="27" fill="#00ff00"/><rect x="429" y="592" width="3" height="24" fill="#00ff00"/><rect x="437" y="594" width="3" height="22" fill="#00ff00"/><rect x="445" y="607" width="3" height="9" fill="#00ff00"/><rect x="453" y="616" width="3" height="1" fill="#ff0000"/><rect x="461" y="616" width="3" height="7" fill="#ff0000"/><rect x="469" y="616" width="3" height="20" fill="#ff0000"/><rect x="477" y="616" width="3" height="41" fill="#ff0000"/><rect x="485" y="616" width="3" height="46" fill="#ff0000"/><rect x="493" y="616" width="3" height="43" fill="#ff0000"/><rect x="501" y="616" width="3" height="38" fill="#ff0000"/><rect x="509" y="616" width="3" height="39" fill="#ff0000"/><rect x="517" y="616" width="3" height="53" fill="#ff0000"/><rect x="525" y="616" width="3" height="42" fill="#ff0000"/><rect x="533" y="616" width="3" height="33" fill="#ff0000"/><rect x="541" y="616" width="3" height="18" fill="#ff0000"/><rect x="549" y="616" width="3" height="7" fill="#ff0000"/><rect x="557" y="603" width="3" height="13" fill="#00ff00"/><rect x="565" y="587" width="3" height="29" fill="#00ff00"/><rect x="573" y="586" width="3" height="30" fill="#00ff00"/><rect x="581" y="580" width="3" height="36" fill="#00ff00"/><rect x="589" y="578" width="3" height="38" fill="#00ff00"/><rect x="597" y="578" width="3" height="38" fill="#00ff00"/><rect x="605" y="578" width="3" height="38" fill="#00ff00"/><rect x="613" y="592" width="3" height="24" fill="#00ff00"/><rect x="621" y="601" width="3" height="15" fill="#00ff00"/><rect x="629" y="616" width="3" height="1.5" fill="#ff0000"/><rect x="637" y="616" width="3" height="8.5" fill="#ff0000"/><rect x="645" y="616" width="3" height="17" fill="#ff0000"/><rect x="653" y="616" width="3" height="8" fill="#ff0000"/><rect x="661" y="616" width="3" height="25" fill="#ff0000"/><rect x="669" y="616" width="3" height="27" fill="#ff0000"/><rect x="677" y="616" width="3" height="24" fill="#ff0000"/><rect x="685" y="616" width="3" height="13" fill="#ff0000"/><rect x="693" y="612" width="3" height="4" fill="#00ff00"/><rect x="701" y="608" width="3" height="8" fill="#00ff00"/><rect x="709" y="609" width="3" height="7" fill="#00ff00"/><rect x="717" y="614" width="3" height="2" fill="#00ff00"/><rect x="725" y="616" width="3" height="4" fill="#ff0000"/><rect x="733" y="616" width="3" height="6" fill="#ff0000"/><rect x="741" y="616" width="3" height="3" fill="#ff0000"/><rect x="749" y="616" width="3" height="6" fill="#ff0000"/><rect x="757" y="616" width="3" height="11" fill="#ff0000"/><rect x="765" y="616" width="3" height="5" fill="#ff0000"/><rect x="773" y="613" width="3" height="3" fill="#00ff00"/><rect x="781" y="615" width="3" height="1" fill="#00ff00"/><rect x="789" y="611" width="3" height="5" fill="#00ff00"/><rect x="797" y="603" width="3" height="13" fill="#00ff00"/><rect x="805" y="590" width="3" height="26" fill="#00ff00"/></g><polyline points="166,631.4 173.6,626.5 181.4,620.7 189,616.3 196.9,613.4 200.8,613.9 204.6,616.3 212.4,619.2 222,621.5 229.8,622.6 245.3,622.6 253,625 262.6,625.7 266.5,623.8 281,623.3 284.9,620.4 292.6,614 300.4,604.9 308,593.3 313,589.9 325.6,584 329.5,585.5 339,595 349.8,612 358,630.4 365.3,656 373.6,674 380.9,680.7 389,659.6 397.3,652 404.7,643 413.8,627.6 421,624 428.4,623 437.6,619.4 444.9,623 454,628.5 461.4,632 470.5,643 479.7,661.5 487,670.6 496,676 510.4,685.2 518.5,702.6 534.6,703.5 545.6,698 552.9,692.6 563.8,672.4 574.8,665 582.1,656 593,646.8 606,637.7 615,639.5 622.4,642.3 629.7,649.6 646,662.4 654.4,658.7 662.6,670.6 670,676 681.3,678.8 688.6,675 696,666 705,662.4 714,664.2 721.6,667 728.9,669.7 747,670.6 754.5,674.3 758,676 765,673.3 776,669.7 787.4,668.8 805.7,651.4" fill="none" stroke="#c06030" stroke-width="2"/><polyline points="166,628 181.4,625.5 196.9,621.2 204.6,620.2 208.5,619.7 229.8,620.7 245.3,621.2 262,622.2 285.9,622.3 294.6,619.4 304.3,612.6 315.9,604 326.6,598 337.2,596 349.8,601.5 357,607.5 364.4,616.6 373.6,635.8 382.7,647.7 390,650 399,650 406.5,646.8 413.8,643 428.4,636.8 439.4,629.4 452,628.5 461.4,630 470.5,633 485,646 506,664.2 516.3,674.3 525.4,681.6 540,690.7 554.7,690.7 571,681.6 589.5,668.8 607.7,654 624.2,648.7 637,650.5 653.5,655 678,667 683,668.8 697.8,668.8 714,665 728.9,668.8 754.5,670.6 787.4,670.6 798.4,668.8 805.7,663.7" fill="none" stroke="#5fa0a8" stroke-width="2"/></svg><div class="t" style="left:170px;top:103px;font-size:10.5px;color:#fff;letter-spacing:-0.6px">AUDUSD,M15&nbsp; 0.70531 0.70660 0.70516 0.70650</div><div class="t" style="left:170px;top:114px;font-size:10.5px;color:#fff;letter-spacing:-0.6px">ICWR: Daily RSI is Long 59.2448</div><div class="t" style="left:170px;top:576px;font-size:10.5px;color:#fff;letter-spacing:-0.6px">MACD&nbsp; (8,17,7) 0.0006266 0.0000000 -0.0008654 -0.0011787</div><div class="t" style="left:992px;top:113px;font-size:10.5px;color:#fff;letter-spacing:-0.6px;letter-spacing:-0.8px">0.72705</div><div class="t" style="left:992px;top:145px;font-size:10.5px;color:#fff;letter-spacing:-0.6px;letter-spacing:-0.8px">0.72530</div><div class="t" style="left:992px;top:177px;font-size:10.5px;color:#fff;letter-spacing:-0.6px;letter-spacing:-0.8px">0.72350</div><div class="t" style="left:992px;top:209px;font-size:10.5px;color:#fff;letter-spacing:-0.6px;letter-spacing:-0.8px">0.72170</div><div class="t" style="left:992px;top:241px;font-size:10.5px;color:#fff;letter-spacing:-0.6px;letter-spacing:-0.8px">0.71990</div><div class="t" style="left:992px;top:273px;font-size:10.5px;color:#fff;letter-spacing:-0.6px;letter-spacing:-0.8px">0.71810</div><div class="t" style="left:992px;top:305px;font-size:10.5px;color:#fff;letter-spacing:-0.6px;letter-spacing:-0.8px">0.71630</div><div class="t" style="left:992px;top:337px;font-size:10.5px;color:#fff;letter-spacing:-0.6px;letter-spacing:-0.8px">0.71455</div><div class="t" style="left:992px;top:369px;font-size:10.5px;color:#fff;letter-spacing:-0.6px;letter-spacing:-0.8px">0.71275</div><div class="t" style="left:992px;top:401px;font-size:10.5px;color:#fff;letter-spacing:-0.6px;letter-spacing:-0.8px">0.71095</div><div class="t" style="left:992px;top:433px;font-size:10.5px;color:#fff;letter-spacing:-0.6px;letter-spacing:-0.8px">0.70915</div><div class="t" style="left:992px;top:465px;font-size:10.5px;color:#fff;letter-spacing:-0.6px;letter-spacing:-0.8px">0.70735</div><div class="t" style="left:992px;top:497px;font-size:10.5px;color:#fff;letter-spacing:-0.6px;letter-spacing:-0.8px">0.70555</div><div class="t" style="left:992px;top:529px;font-size:10.5px;color:#fff;letter-spacing:-0.6px;letter-spacing:-0.8px">0.70375</div><div class="t" style="left:992px;top:561px;font-size:10.5px;color:#fff;letter-spacing:-0.6px;letter-spacing:-0.8px">0.70200</div><div class="a" style="left:988px;top:480px;width:38px;height:11px;background:#fff"></div><div class="t" style="left:990px;top:481px;font-size:10.5px;color:#000">0.70650</div><div class="t" style="left:990px;top:572px;font-size:10.5px;color:#fff;letter-spacing:-0.6px">0.001088</div><div class="t" style="left:990px;top:611px;font-size:10.5px;color:#fff;letter-spacing:-0.6px">0.00</div><div class="t" style="left:988px;top:699px;font-size:10.5px;color:#fff;letter-spacing:-0.6px">-0.00233</div><div class="t" style="left:165px;top:716px;font-size:10.5px;color:#fff;letter-spacing:-0.6px">7 Jan 2009</div><div class="t" style="left:229px;top:716px;font-size:10.5px;color:#fff;letter-spacing:-0.6px">7 Jan 12:00</div><div class="t" style="left:293px;top:716px;font-size:10.5px;color:#fff;letter-spacing:-0.6px">7 Jan 14:00</div><div class="t" style="left:357px;top:716px;font-size:10.5px;color:#fff;letter-spacing:-0.6px">7 Jan 16:00</div><div class="t" style="left:421px;top:716px;font-size:10.5px;color:#fff;letter-spacing:-0.6px">7 Jan 18:00</div><div class="t" style="left:485px;top:716px;font-size:10.5px;color:#fff;letter-spacing:-0.6px">7 Jan 20:00</div><div class="t" style="left:549px;top:716px;font-size:10.5px;color:#fff;letter-spacing:-0.6px">7 Jan 22:00</div><div class="t" style="left:613px;top:716px;font-size:10.5px;color:#fff;letter-spacing:-0.6px">8 Jan 00:00</div><div class="t" style="left:677px;top:716px;font-size:10.5px;color:#fff;letter-spacing:-0.6px">8 Jan 02:00</div><div class="t" style="left:741px;top:716px;font-size:10.5px;color:#fff;letter-spacing:-0.6px">8 Jan 04:00</div><div class="t" style="left:805px;top:716px;font-size:10.5px;color:#fff;letter-spacing:-0.6px">8 Jan 06:00</div><div class="a" style="left:161px;top:729px;width:867px;height:2px;background:#d4d0c8"></div><div class="a" style="left:161px;top:731px;width:866px;height:1px;background:#000"></div><div class="a" style="left:161px;top:732px;width:2px;height:17px;background:#404040"></div><div class="t" style="left:175px;top:735px;font-size:11px;color:#404040">EURJPY,M15</div><div class="a" style="left:249px;top:734px;width:1px;height:13px;background:#404040"></div><div class="t" style="left:259px;top:735px;font-size:11px;color:#404040">USDCAD,M15</div><div class="a" style="left:337px;top:734px;width:1px;height:13px;background:#404040"></div><div class="t" style="left:347px;top:735px;font-size:11px;color:#404040">EURAUD,M15</div><div class="a" style="left:425px;top:734px;width:1px;height:13px;background:#404040"></div><div class="t" style="left:435px;top:735px;font-size:11px;color:#404040">NZDJPY,M15</div><div class="a" style="left:509px;top:734px;width:1px;height:13px;background:#404040"></div><div class="t" style="left:519px;top:735px;font-size:11px;color:#404040">USDJPY,M15</div><div class="a" style="left:593px;top:734px;width:1px;height:13px;background:#404040"></div><div class="t" style="left:603px;top:735px;font-size:11px;color:#404040">GBPCHF,M15</div><div class="a" style="left:677px;top:734px;width:1px;height:13px;background:#404040"></div><div class="t" style="left:688px;top:735px;font-size:11px;color:#404040">NZDUSD,M15</div><div class="a" style="left:765px;top:731px;width:88px;height:19px;background:#fff;border:1px solid #000;border-top:none"></div><div class="t" style="left:776px;top:735px;font-size:11px;color:#000">AUDUSD,M15</div><div class="t" style="left:863px;top:735px;font-size:11px;color:#404040">AUDNZD,H1</div><div class="a" style="left:934px;top:734px;width:1px;height:13px;background:#404040"></div><div class="t" style="left:945px;top:735px;width:48px;overflow:hidden;font-size:11px;color:#404040">AUDCAD,H1</div><svg style="left:1000px;top:736px;" width="4" height="8" viewBox="0 0 4 8"><path d="M4 0v8L0 4z" fill="#000"/></svg><svg style="left:1017px;top:736px;" width="4" height="8" viewBox="0 0 4 8"><path d="M0 0v8l4-4z" fill="#000"/></svg><div class="a" style="left:161px;top:751px;width:867px;height:1px;background:#fff"></div><div class="t" style="left:2px;top:757px;letter-spacing:0;font-size:11px;direction:rtl;width:124px;text-align:right">F1 للمساعدة، اضغط على</div><div class="a" style="left:307px;top:754px;width:1px;height:16px;background:#808080"></div><div class="a" style="left:308px;top:754px;width:1px;height:16px;background:#fff"></div><div class="a" style="left:417px;top:754px;width:1px;height:16px;background:#808080"></div><div class="a" style="left:418px;top:754px;width:1px;height:16px;background:#fff"></div><div class="a" style="left:518px;top:754px;width:1px;height:16px;background:#808080"></div><div class="a" style="left:519px;top:754px;width:1px;height:16px;background:#fff"></div><div class="a" style="left:590px;top:754px;width:1px;height:16px;background:#808080"></div><div class="a" style="left:591px;top:754px;width:1px;height:16px;background:#fff"></div><div class="a" style="left:661px;top:754px;width:1px;height:16px;background:#808080"></div><div class="a" style="left:662px;top:754px;width:1px;height:16px;background:#fff"></div><div class="a" style="left:730px;top:754px;width:1px;height:16px;background:#808080"></div><div class="a" style="left:731px;top:754px;width:1px;height:16px;background:#fff"></div><div class="a" style="left:801px;top:754px;width:1px;height:16px;background:#808080"></div><div class="a" style="left:802px;top:754px;width:1px;height:16px;background:#fff"></div><div class="a" style="left:867px;top:754px;width:1px;height:16px;background:#808080"></div><div class="a" style="left:868px;top:754px;width:1px;height:16px;background:#fff"></div><div class="t" style="left:313px;top:757px;font-size:11px;letter-spacing:0">Default</div><svg style="left:872px;top:755px;" width="24" height="13" viewBox="0 0 24 13"><rect x="0" y="6" width="2" height="7" fill="#5a8a10"/><rect x="3" y="5" width="2" height="8" fill="#5a8a10"/><rect x="6" y="4" width="2" height="9" fill="#5a8a10"/><rect x="9" y="3" width="2" height="10" fill="#5a8a10"/><rect x="12" y="2" width="2" height="11" fill="#1a4a8a"/><rect x="15" y="2" width="2" height="11" fill="#1a4a8a"/><rect x="18" y="2" width="2" height="11" fill="#1a4a8a"/><rect x="21" y="2" width="2" height="11" fill="#1a4a8a"/></svg><div class="t" style="left:921px;top:757px;font-size:11px;letter-spacing:0">1074/2 kb</div><svg style="left:1011px;top:756px;" width="14" height="14" viewBox="0 0 14 14"><path d="M13 1L1 13M13 5L5 13M13 9L9 13" stroke="#808080" stroke-width="1"/><path d="M13 2L2 13M13 6L6 13M13 10L10 13" stroke="#fff" stroke-width="1"/></svg></body></html>
